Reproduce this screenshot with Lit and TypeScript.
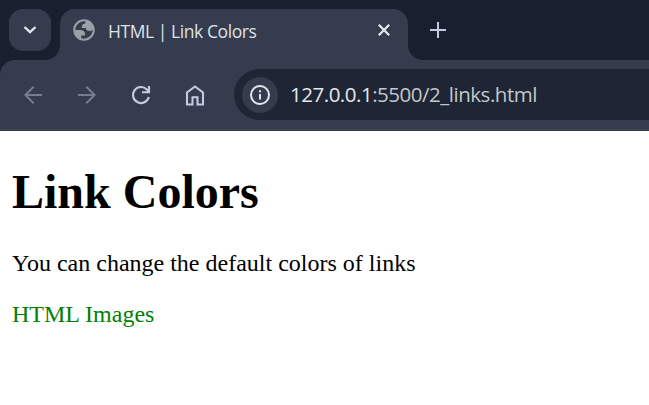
import { LitElement, html, css } from "lit";
import { customElement } from "lit/decorators.js";

@customElement("app-root")
export class AppRoot extends LitElement {
  static styles = css`
    :host { display: block; height: 405px; overflow: hidden; background: #fff; }
    svg { display: block; flex: none; }
    .strip { display: flex; height: 60px; background: #182030; align-items: flex-start; padding-top: 9px; box-sizing: border-box; }
    .search { width: 42px; height: 42px; margin-left: 9px; border-radius: 14px; background: #343c4d; display: grid; place-items: center; }
    .tab { position: relative; display: flex; align-items: flex-start; width: 348px; height: 51px; margin-left: 9px; border-radius: 15px 15px 0 0; background: #343c4d; box-sizing: border-box; padding: 10px 17px 0 13px; }
    .tab::before, .tab::after { content: ""; position: absolute; bottom: 0; width: 15px; height: 15px; }
    .tab::before { left: -15px; background: radial-gradient(circle at 0 0, transparent 14.5px, #343c4d 15.5px); }
    .tab::after { right: -15px; background: radial-gradient(circle at 100% 0, transparent 14.5px, #343c4d 15.5px); }
    .title { font: 17.5px/22px "Open Sans", sans-serif; color: #dfe1e8; margin: 1px 0 0 13px; flex: 1; letter-spacing: -0.43px; white-space: nowrap; }
    .plus { margin: 13px 0 0 22px; }
    .close { margin-top: 4px; }
    .bar-wrap { background: #182030; }
    .bar { display: flex; align-items: center; height: 71px; box-sizing: border-box; background: #343c4d; border-radius: 15px 0 0 0; border-bottom: 1px solid #343c4d; box-shadow: inset 0 -1px #434b5b; padding: 0 0 1px 21px; }
    .nav { display: flex; gap: 30px; }
    .address { display: flex; align-items: center; flex: 1; height: 51px; margin-left: 27px; border-radius: 26px 0 0 26px; background: #1e2636; padding-left: 8px; box-sizing: border-box; }
    .info { width: 36px; height: 36px; border-radius: 50%; background: #343c4d; display: grid; place-items: center; }
    .url { font: 20.5px/28px "Open Sans", sans-serif; color: #c3c6cb; margin: 0 0 2px 12px; letter-spacing: -0.48px; white-space: nowrap; }
    .host { color: #e3e6ec; }
    .page { padding: 0 12px; font: 24px/27px "Liberation Serif", serif; color: #000; }
    h1 { font-size: 48px; line-height: 54px; margin: 0; padding-top: 34px; }
    p { margin: 31px 0 24px; }
    a { color: #008000; text-decoration: none; }
  `;

  render() {
    return html`
      <div class="strip">
        <div class="search">
          <svg width="14" height="10" viewBox="0 0 14 10" fill="none" stroke="#e3e6ec" stroke-width="2.4"><path d="M1.5 2 7 7.2 12.5 2" /></svg>
        </div>
        <div class="tab">
          <svg width="22" height="22" viewBox="1.8 1.8 20.4 20.4"><path fill="#9aa0a6" fill-rule="evenodd" d="M12 2C6.48 2 2 6.48 2 12s4.48 10 10 10 10-4.48 10-10S17.52 2 12 2zM4 12h4.4c3.407.022 4.922 1.73 4.543 5.127H9.488v2.47a8.004 8.004 0 0 0 10.498-8.08C19.327 12.5 18.332 13 17 13c-2.137 0-3.206-.916-3.206-2.75h-3.748c-.274-2.728.683-4.092 2.87-4.092 0-.975.327-1.597.811-1.97A8.004 8.004 0 0 0 4 12z" transform="rotate(0)" /></svg>
          <span class="title">HTML | Link Colors</span>
          <svg class="close" width="14" height="14" viewBox="0 0 14 14" stroke="#e3e6ec" stroke-width="2.3"><path d="m1.8 1.8 10.4 10.4M12.2 1.8 1.8 12.2" /></svg>
        </div>
        <svg class="plus" width="16" height="16" viewBox="0 0 16 16" stroke="#c5cae3" stroke-width="2"><path d="M8 0v16M0 8h16" /></svg>
      </div>
      <div class="bar-wrap">
        <div class="bar">
          <div class="nav">
            <svg width="24" height="24" viewBox="0 0 24 24" fill="none" stroke="#777d8f" stroke-width="2"><path d="M21 12H4M12.7 3.7 4.4 12l8.3 8.3" /></svg>
            <svg width="24" height="24" viewBox="0 0 24 24" fill="none" stroke="#777d8f" stroke-width="2"><path d="M3 12h17M11.3 3.7l8.3 8.3-8.3 8.3" /></svg>
            <svg width="24" height="24" viewBox="0 0 24 24" fill="none" stroke="#c5cae3" stroke-width="2.1"><path d="M19.8 14A8 8 0 1 1 17.8 6.5L20 9M20 3v6.2h-7" /></svg>
            <svg width="24" height="24" viewBox="0 0 24 24" fill="none" stroke="#c5cae3" stroke-width="2.1"><path d="M4 21.5V9.5l8-6 8 6v12h-5.5v-7.2h-5v7.2z" /></svg>
          </div>
          <div class="address">
            <div class="info">
              <svg width="22" height="22" viewBox="0 0 22 22" fill="none" stroke="#e3e6ec" stroke-width="2"><circle cx="11" cy="11" r="9" /><path d="M11 10v5.5M11 6.2v2.1" /></svg>
            </div>
            <div class="url"><span class="host">127.0.0.1</span>:5500/2_links.html</div>
          </div>
        </div>
      </div>
      <main class="page">
        <h1>Link Colors</h1>
        <p>You can change the default colors of links</p>
        <a>HTML Images</a>
      </main>
    `;
  }
}
